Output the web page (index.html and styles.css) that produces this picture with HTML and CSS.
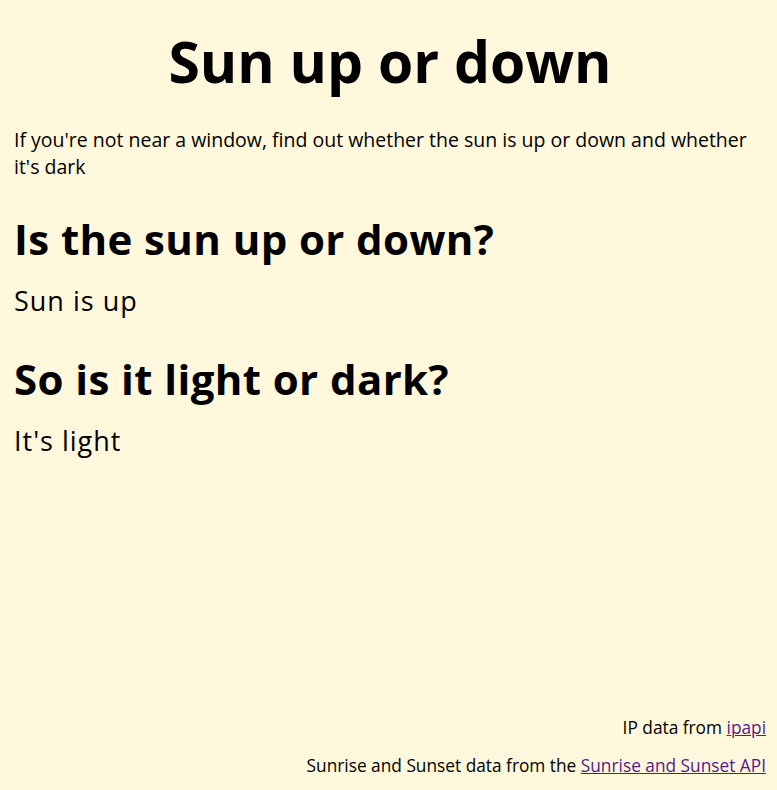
FILE: index.html
```html
<!DOCTYPE html>
<html lang="en">
<head>
<meta charset="utf-8">
<title>Sun up or down</title>
<link rel="stylesheet" href="styles.css">
</head>
<body>
<main class="main">
<h1 class="title">Sun up or down</h1>
<p class="intro">If you're not near a window, find out whether the sun is up or down and whether it's dark</p>
<h2 class="question">Is the sun up or down?</h2>
<p class="answer">Sun is up</p>
<h2 class="question">So is it light or dark?</h2>
<p class="answer">It's light</p>
</main>
<footer class="footer">
<p class="credit">IP data from <a href="#" class="link">ipapi</a></p>
<p class="credit">Sunrise and Sunset data from the <a href="#" class="link">Sunrise and Sunset API</a></p>
</footer>
</body>
</html>
```
FILE: styles.css
```css
html, body {
  margin: 0;
  padding: 0;
}
body {
  background: #fff8dc;
  color: #000;
  font-family: "Open Sans", "Noto Sans", sans-serif;
  min-height: 100vh;
  box-sizing: border-box;
  padding: 0 11px 12px 14px;
  display: flex;
  flex-direction: column;
}
.title {
  text-align: center;
  font-size: 57px;
  font-weight: 700;
  line-height: 64px;
  margin: 29px 0 33px;
}
.intro {
  font-size: 19.5px;
  line-height: 27px;
  margin: 0 0 35px;
}
.question {
  font-size: 42px;
  font-weight: 700;
  line-height: 48px;
  letter-spacing: 0.4px;
  margin: 0 0 21px;
}
.answer {
  font-size: 27px;
  line-height: 34px;
  letter-spacing: 1px;
  margin: 0 0 37px;
}
.footer {
  margin-top: auto;
  text-align: right;
  font-size: 17.3px;
}
.credit {
  margin: 14px 0 0;
  line-height: 24px;
}
.credit:first-child {
  margin-top: 0;
}
.link {
  color: #551a8b;
}
```
